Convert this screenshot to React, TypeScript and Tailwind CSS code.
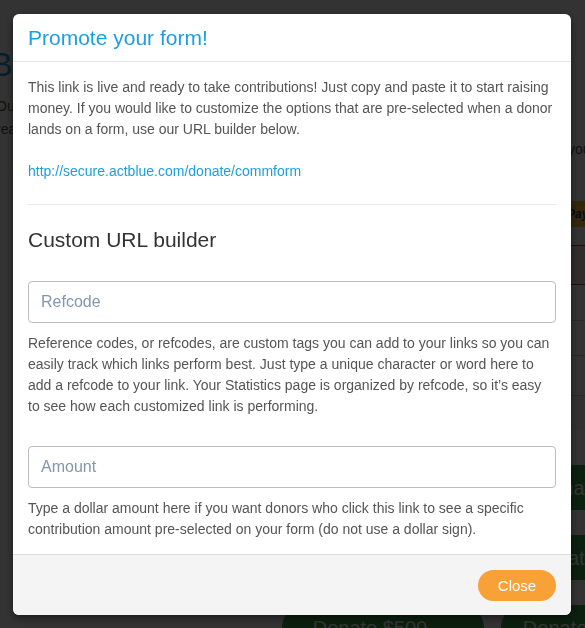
import React from 'react'

const font = { fontFamily: '"Liberation Sans", Arial, Helvetica, sans-serif' }

function BackgroundPage() {
  return (
    <div className="flex min-h-screen bg-white overflow-hidden" style={font}>
      {/* Left column */}
      <div className="w-[282px] shrink-0 pt-[44px]">
        <h1 className="text-[34px] leading-[40px] text-[#1a9fe0] -ml-[10px]">Bring it home</h1>
        <p className="mt-[11px] text-[14px] leading-[23px] text-[#555] -ml-[4px]">
          Our fundraising goal is in
          <br />
          reach, help us with a donation
        </p>
      </div>

      {/* Right column */}
      <div className="w-[420px] shrink-0 pt-[138px]">
        <p className="text-[14px] leading-[23px] text-[#555] pl-[286px] whitespace-nowrap">you</p>
        <div className="mt-[40px] h-[26px] bg-[#ffc439] flex items-center pl-[285px] text-[12px] italic font-bold text-[#1a3a7a]">
          PayPal
        </div>
        <div className="mt-[18px] h-[40px] border border-[#a94442] bg-[#f2dede]" />
        <div className="mt-[35px] border-t border-[#ccc] h-[35px]" />
        <div className="border-t border-[#ccc] h-[40px]" />
        <div className="border-t border-[#ccc] h-[35px] bg-[#f5f5f5]" />
        <div className="grid grid-cols-2 gap-x-[17px] gap-y-[25px] mt-[35px]">
          {['$25', '$50', '$100', '$250', '$500', '$1,000'].map((amt) => (
            <div
              key={amt}
              className="h-[45px] rounded-full bg-[#3c9e4c] text-white text-[20px] flex items-center justify-center"
            >
              Donate {amt} →
            </div>
          ))}
        </div>
      </div>
    </div>
  )
}

function Field({ placeholder }: { placeholder: string }) {
  return (
    <input
      type="text"
      placeholder={placeholder}
      className="block w-full h-[42px] px-[12px] rounded-[4px] border border-[#bdbdbd] text-[16px] text-[#555] placeholder:text-[#8396ad] outline-none"
      style={font}
    />
  )
}

export default function App() {
  return (
    <div className="relative">
      <BackgroundPage />
      {/* Backdrop + modal */}
      <div className="fixed inset-0 bg-black/80 flex justify-start items-start" style={font}>
        <div className="mt-[14px] ml-[13px] w-[558px] bg-white rounded-[6px] overflow-hidden shadow-[0_3px_9px_rgba(0,0,0,0.5)]">
          <div className="h-[48px] px-[15px] flex items-center border-b border-[#e5e5e5]">
            <h4 className="text-[21px] text-[#1a9fe0] leading-none -mt-[1px]">Promote your form!</h4>
          </div>

          <div className="px-[15px] pt-[15px] pb-[14px] text-[14px] leading-[21px] text-[#555]">
            <p>
              This link is live and ready to take contributions! Just copy and paste it to start raising
              money. If you would like to customize the options that are pre-selected when a donor
              lands on a form, use our URL builder below.
            </p>
            <p className="mt-[21px]">
              <a href="#" className="text-[#1a9fe0]">http://secure.actblue.com/donate/commform</a>
            </p>
            <hr className="mt-[22px] border-0 border-t border-[#e8e8e8]" />
            <h3 className="mt-[23px] text-[21px] leading-[23px] text-[#333]">Custom URL builder</h3>

            <div className="mt-[30px]">
              <Field placeholder="Refcode" />
            </div>
            <p className="mt-[10px]">
              Reference codes, or refcodes, are custom tags you can add to your links so you can
              easily track which links perform best. Just type a unique character or word here to
              add a refcode to your link. Your Statistics page is organized by refcode, so it’s easy
              to see how each customized link is performing.
            </p>

            <div className="mt-[29px]">
              <Field placeholder="Amount" />
            </div>
            <p className="mt-[10px]">
              Type a dollar amount here if you want donors who click this link to see a specific
              contribution amount pre-selected on your form (do not use a dollar sign).
            </p>
          </div>

          <div className="h-[61px] px-[15px] flex items-center justify-end bg-[#f4f4f4] border-t border-[#dddddd]">
            <button className="h-[31px] w-[78px] rounded-full bg-[#f8a136] text-white text-[15px] leading-none">
              Close
            </button>
          </div>
        </div>
      </div>
    </div>
  )
}
